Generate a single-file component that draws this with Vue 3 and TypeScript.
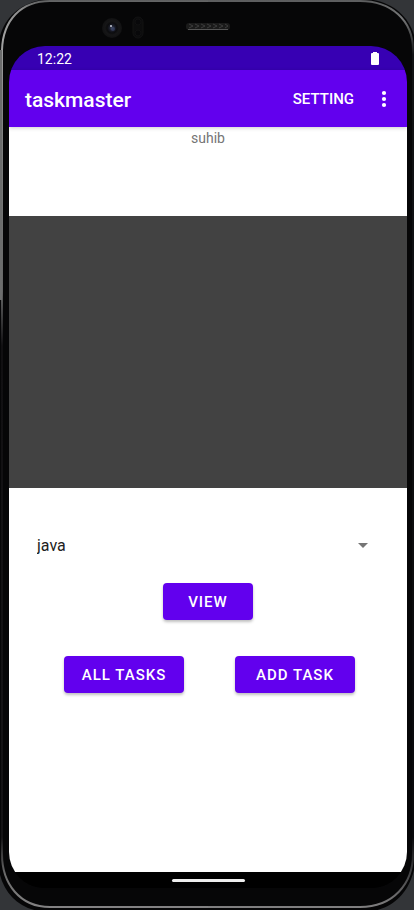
<script setup lang="ts">
import { ref } from 'vue'

const userName = ref<string>('suhib')
const tasks: string[] = ['java', 'kotlin', 'python']
const selectedTask = ref<string>(tasks[0])
</script>

<template>
  <div class="device">
    <svg class="shell" viewBox="0 0 414 910" preserveAspectRatio="none" aria-hidden="true">
      <defs>
        <linearGradient id="rim-left" x1="0" y1="0" x2="0" y2="910" gradientUnits="userSpaceOnUse">
          <stop offset="0" stop-color="#5c5d5e" />
          <stop offset="0.01" stop-color="#8c8c8c" />
          <stop offset="0.04" stop-color="#a2a2a2" />
          <stop offset="0.12" stop-color="#858686" />
          <stop offset="0.32" stop-color="#656666" />
          <stop offset="0.38" stop-color="#111012" />
          <stop offset="0.92" stop-color="#151416" />
          <stop offset="0.96" stop-color="#6a6a6a" />
          <stop offset="1" stop-color="#858485" />
        </linearGradient>
        <linearGradient id="rim-right" x1="0" y1="0" x2="0" y2="910" gradientUnits="userSpaceOnUse">
          <stop offset="0" stop-color="#5c5d5e" />
          <stop offset="0.02" stop-color="#777879" />
          <stop offset="0.06" stop-color="#111214" />
          <stop offset="0.92" stop-color="#09090b" />
          <stop offset="0.96" stop-color="#424244" />
          <stop offset="1" stop-color="#858485" />
        </linearGradient>
        <radialGradient id="lens">
          <stop offset="0" stop-color="#41475c" />
          <stop offset="0.3" stop-color="#181a25" />
          <stop offset="0.5" stop-color="#0c0c0e" />
          <stop offset="0.7" stop-color="#161617" />
          <stop offset="1" stop-color="#111112" />
        </radialGradient>
      </defs>
      <path
        d="M46 -1H362C393 -1 416 20 416 50V852C416 885 397 912 362 912H50C18 912 -2 890 -2 858V46C1 20 18 3 46 -1Z"
        fill="#060607"
      />
      <path
        d="M208 1H50C21 1 3 20 2 50V854C2 884 20 907 50 907H208"
        fill="none"
        stroke="url(#rim-left)"
        stroke-width="2"
      />
      <path d="M1 50V300" fill="none" stroke="#6c6d6d" stroke-width="2" />
      <path
        d="M208 1H360C391 1 413 20 413 50V854C413 884 393 907 360 907H208"
        fill="none"
        stroke="url(#rim-right)"
        stroke-width="2"
      />
      <circle cx="112" cy="28" r="10" fill="url(#lens)" />
      <circle cx="111" cy="26" r="1" fill="#c9ccd8" />
      <circle cx="113" cy="29" r="2" fill="#3d496f" opacity="0.6" />
      <rect x="133" y="17" width="10" height="21" rx="5" fill="#0c0c0d" stroke="#121213" />
      <circle cx="138" cy="22" r="3" fill="#08080a" stroke="#101011" />
      <circle cx="138" cy="33" r="3" fill="#08080a" stroke="#101011" />
      <rect x="186" y="23" width="44" height="7" rx="3" fill="#1a1a1a" />
      <path
        d="M189 24l4 2-4 2m6-4l4 2-4 2m6-4l4 2-4 2m6-4l4 2-4 2m6-4l4 2-4 2m6-4l4 2-4 2m6-4l3 2-3 2"
        fill="none"
        stroke="#3c3c3c"
      />
      <path d="M188 29.5H228" stroke="#555" />
    </svg>

    <div class="screen">
      <div class="status-bar">
        <time>12:22</time>
        <svg class="battery" width="8" height="13" viewBox="0 0 8 13" role="img" aria-label="Battery full">
          <path
            d="M2 0H6V1H7Q8 1 8 2V12Q8 13 7 13H1Q0 13 0 12V2Q0 1 1 1H2Z"
            fill="#fff"
          />
        </svg>
      </div>

      <header class="app-bar">
        <h1>taskmaster</h1>
        <button class="setting" type="button">SETTING</button>
        <button class="overflow" type="button" aria-label="More options">
          <svg width="6" height="18" viewBox="0 0 6 18" fill="#fff" aria-hidden="true">
            <circle cx="3" cy="3" r="2.1" />
            <circle cx="3" cy="9" r="2.1" />
            <circle cx="3" cy="15" r="2.1" />
          </svg>
        </button>
      </header>

      <main>
        <p class="user">{{ userName }}</p>
        <section class="task-list" aria-label="Tasks"></section>
        <div class="picker">
          <select v-model="selectedTask" aria-label="Task">
            <option v-for="task in tasks" :key="task" :value="task">{{ task }}</option>
          </select>
          <svg class="caret" width="10" height="5" viewBox="0 0 10 5" aria-hidden="true">
            <path d="M0 0H10L5 5Z" fill="#757575" />
          </svg>
        </div>
        <button class="action view" type="button">VIEW</button>
        <div class="actions">
          <button class="action" type="button">ALL TASKS</button>
          <button class="action" type="button">ADD TASK</button>
        </div>
      </main>

      <nav class="gesture-bar" aria-label="System navigation">
        <span class="handle"></span>
      </nav>
    </div>
  </div>
</template>

<style>
body {
  margin: 0;
  background: #333538;
}
</style>

<style scoped>
.device {
  position: relative;
  display: flex;
  box-sizing: border-box;
  min-height: 100vh;
  padding: 46px 7px 22px 9px;
  overflow: hidden;
  font-family: Roboto, "Liberation Sans", sans-serif;
}

.shell {
  position: absolute;
  inset: 0;
  width: 100%;
  height: 100%;
}

.screen {
  position: relative;
  display: flex;
  flex: 1;
  flex-direction: column;
  min-width: 0;
  overflow: hidden;
  border-radius: 36px;
  background: #000;
}

.status-bar {
  display: flex;
  align-items: center;
  justify-content: space-between;
  height: 24px;
  padding: 0 28px;
  background: #3700b3;
  color: #fff;
  font-size: 14px;
  line-height: 24px;
}

.status-bar time {
  padding-top: 2px;
}

.app-bar {
  position: relative;
  display: flex;
  align-items: center;
  height: 57px;
  padding: 2px 12px 0 16px;
  box-sizing: border-box;
  background: #6200ee;
  box-shadow: 0 1px 4px rgba(0, 0, 0, 0.2);
  color: #fff;
}

h1 {
  flex: 1;
  margin: 0;
  font-size: 21px;
  font-weight: 500;
  line-height: 28px;
}

button {
  padding: 0;
  border: 0;
  color: #fff;
  font-family: inherit;
  font-size: 15px;
  font-weight: 500;
  cursor: pointer;
}

.setting {
  height: 44px;
  padding: 0 12px 2px;
  background: none;
}

.overflow {
  display: flex;
  align-items: center;
  justify-content: center;
  width: 22px;
  height: 44px;
  margin-left: 7px;
  padding-bottom: 2px;
  background: none;
}

main {
  display: flex;
  flex: 1;
  flex-direction: column;
  background: #fff;
}

.user {
  margin: 0;
  height: 89px;
  color: #757575;
  font-size: 14px;
  line-height: 22px;
  text-align: center;
}

.task-list {
  height: 272px;
  background: #424242;
}

.picker {
  display: flex;
  align-items: center;
  margin: 45px 39px 0 28px;
}

select {
  flex: 1;
  min-width: 0;
  height: 24px;
  margin-right: -10px;
  padding: 0;
  border: 0;
  appearance: none;
  background: none;
  color: #212121;
  font-family: inherit;
  font-size: 16px;
}

.caret {
  pointer-events: none;
}

.action {
  height: 37px;
  border-radius: 4px;
  background: #6200ee;
  box-shadow: 0 2px 3px rgba(0, 0, 0, 0.25);
  letter-spacing: 1px;
}

.view {
  align-self: center;
  width: 90px;
  margin-top: 26px;
}

.actions {
  display: flex;
  justify-content: space-between;
  margin: 36px 52px 0 55px;
}

.actions .action {
  width: 120px;
}

.gesture-bar {
  display: flex;
  justify-content: center;
  height: 16px;
  padding-top: 7px;
  box-sizing: border-box;
  background: #000;
}

.handle {
  width: 73px;
  height: 3px;
  border-radius: 2px;
  background: #eee;
}
</style>
